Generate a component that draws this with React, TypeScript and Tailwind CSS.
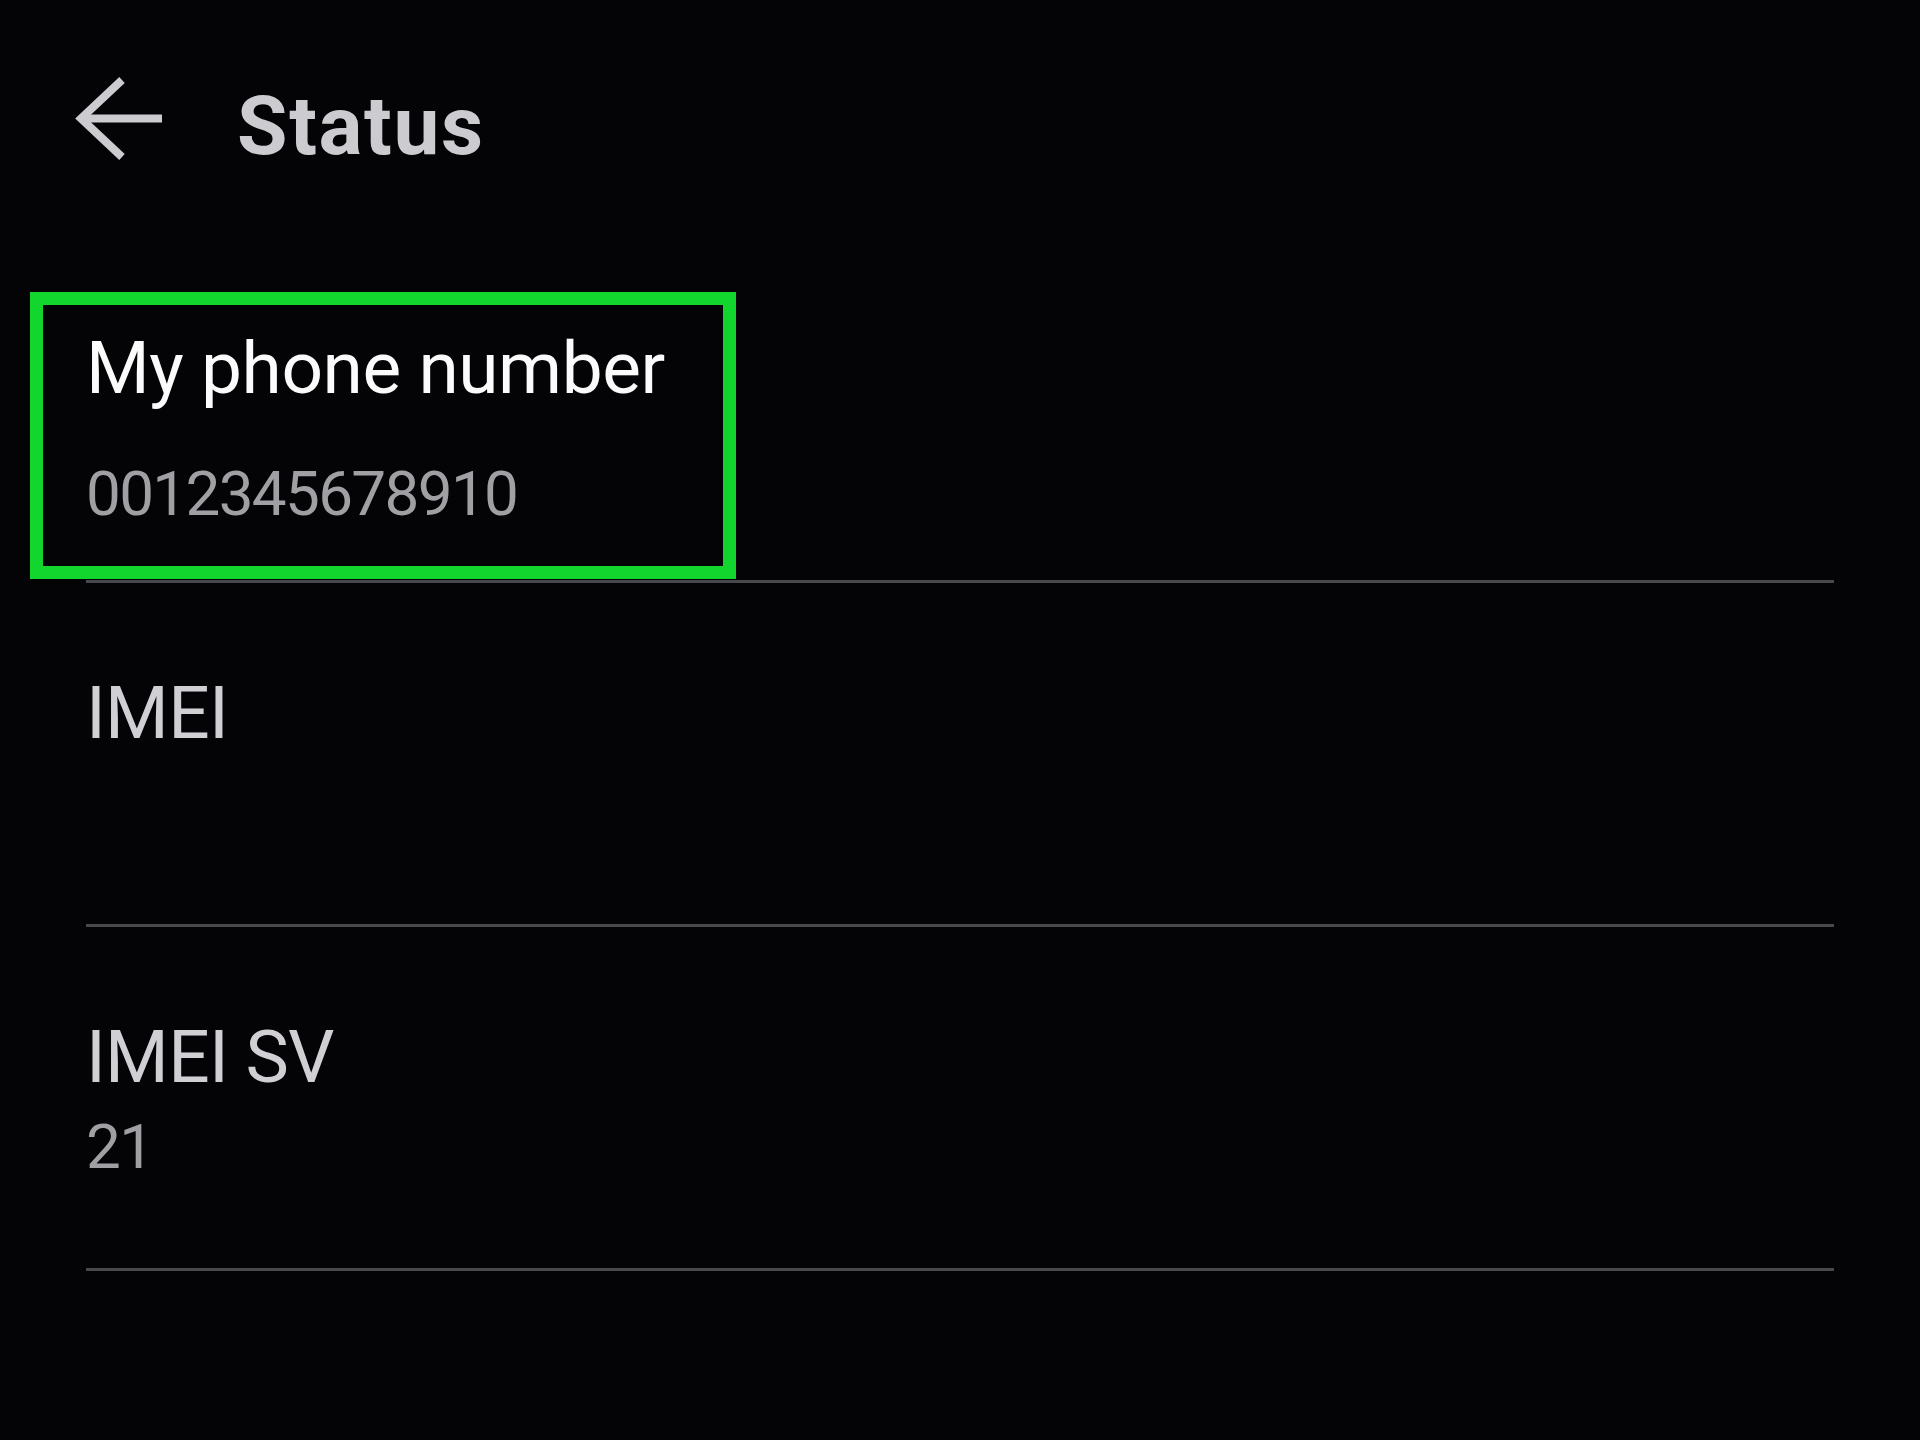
import React from 'react'

const rows = [
  { title: 'My phone number', value: '0012345678910', gap: 'mt-[58px]', highlight: true },
  { title: 'IMEI', value: '', gap: 'mt-[22px]', highlight: false },
  { title: 'IMEI SV', value: '21', gap: 'mt-[22px]', highlight: false },
]

function BackArrow() {
  return (
    <svg viewBox="0 0 87 83" className="w-[87px] h-[83px] shrink-0" fill="none" stroke="#cccbd0" strokeWidth="8">
      <path d="M6 41.5 H87" />
      <path d="M47 3 L6 41.5 L47 80" />
    </svg>
  )
}

export default function App() {
  return (
    <div className="min-h-screen w-full bg-[#040407] font-['Roboto','Liberation_Sans',sans-serif] overflow-hidden">
      {/* Toolbar */}
      <header className="h-[238px] flex items-start pt-[77px] pl-[75px]">
        <BackArrow />
        <h1 className="ml-[75px] mt-[8px] text-[82px] leading-none font-bold text-[#cccbd0] tracking-[0.02em]">
          Status
        </h1>
      </header>

      {/* Status list */}
      <div className="flex flex-col mx-[86px]">
        {rows.map((row, i) => (
          <div
            key={row.title}
            className={`relative border-b-[3px] border-[#48484d] pt-[94px] ${i === 0 ? 'h-[345px]' : 'h-[344px]'}`}
          >
            {row.highlight && (
              <div className="absolute left-[-56px] top-[54px] w-[706px] h-[287px] border-[13px] border-[#12d62d] pointer-events-none" />
            )}
            <div
              className={`text-[73px] leading-none ${
                row.highlight ? 'text-[#fbfbfb] tracking-[-0.006em]' : 'text-[#d0cfd4] tracking-[-0.01em]'
              }`}
            >
              {row.title}
            </div>
            {row.value && (
              <div className={`${row.gap} text-[62px] leading-none text-[#a09fa4] tracking-[-0.027em]`}>
                {row.value}
              </div>
            )}
          </div>
        ))}
      </div>
    </div>
  )
}
